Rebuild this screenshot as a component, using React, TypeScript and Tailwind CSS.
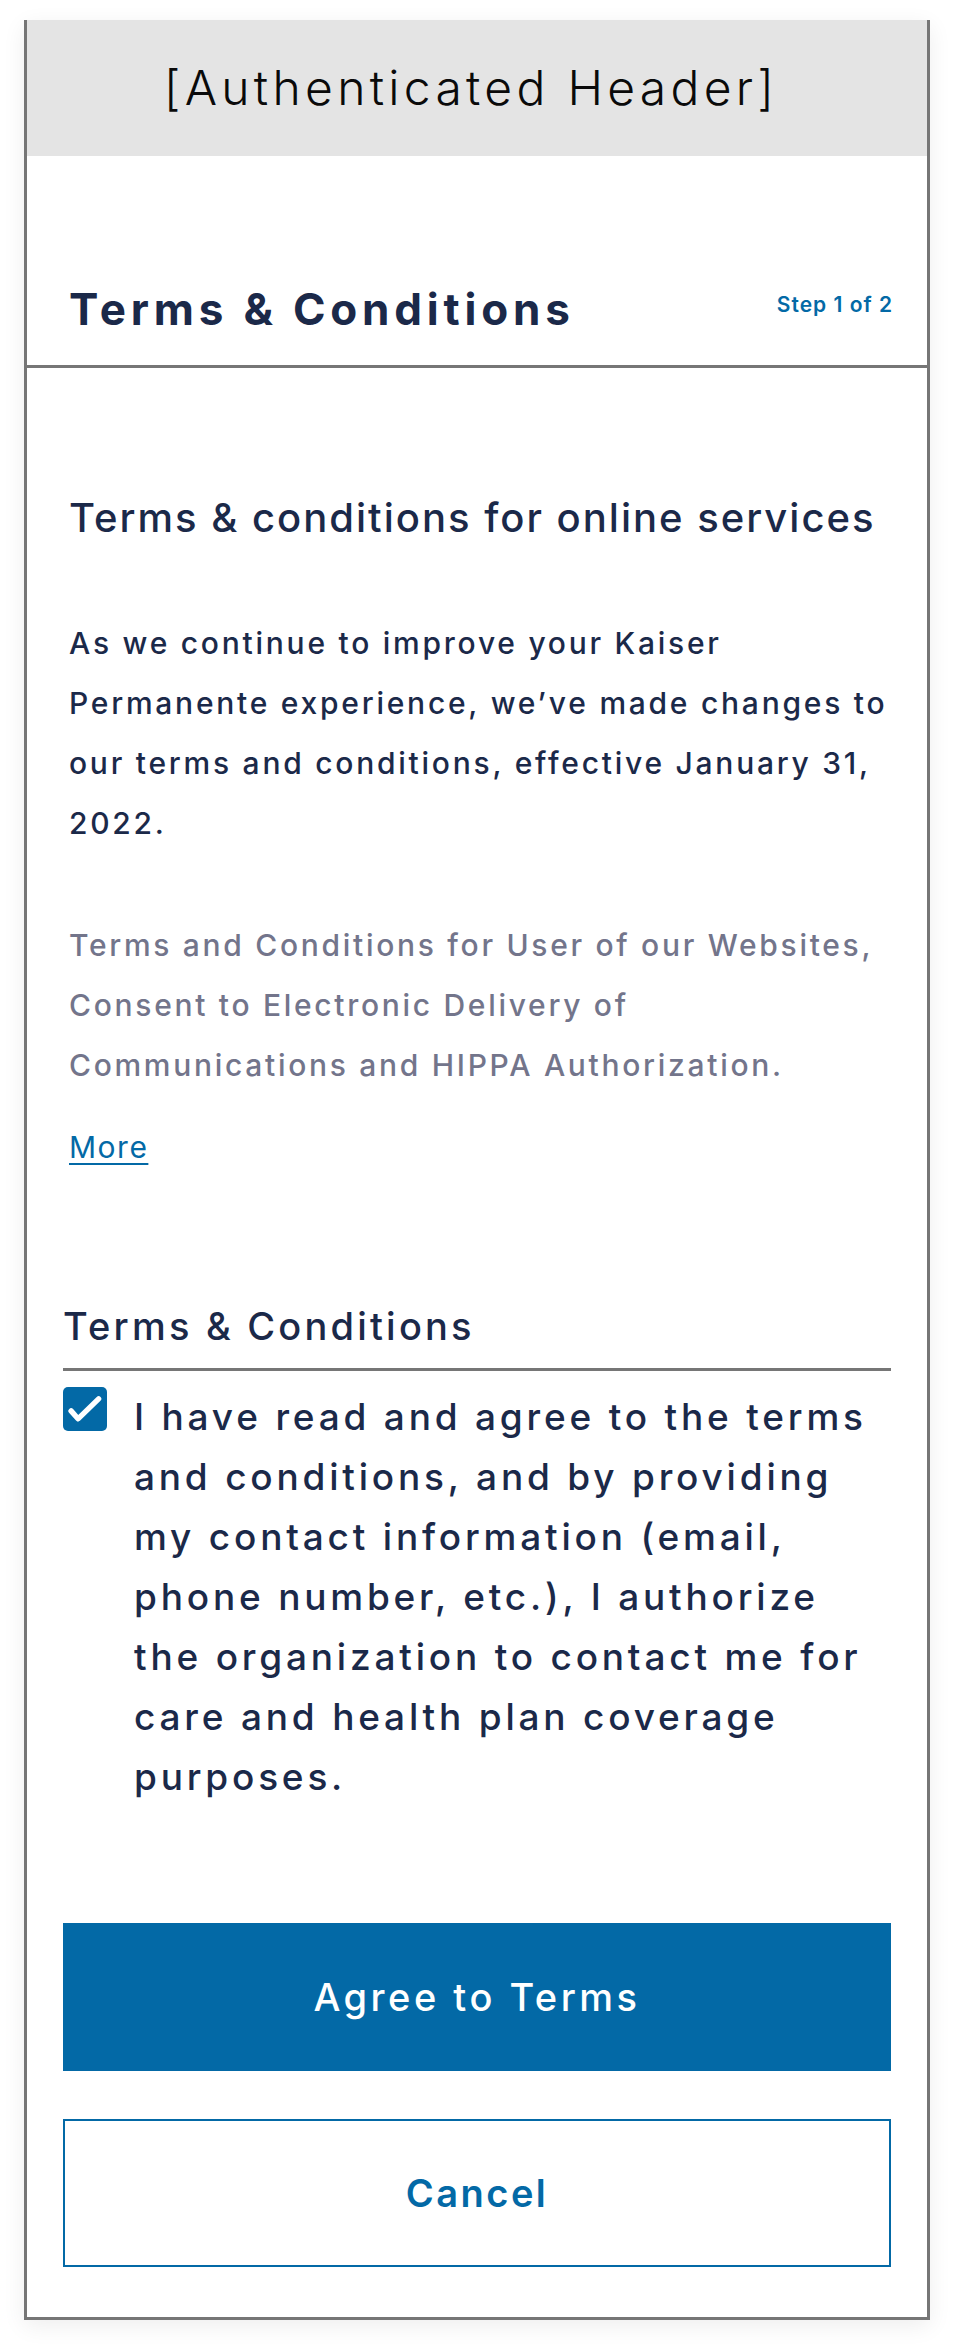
import React from "react";

function CheckIcon() {
  return (
    <svg viewBox="0 0 24 24" className="h-full w-full" fill="none">
      <path
        d="M3.2 13.2 L7.6 18.2 L20.6 5.6"
        stroke="#ffffff"
        strokeWidth="3.4"
        strokeLinecap="round"
        strokeLinejoin="round"
      />
    </svg>
  );
}

export default function App() {
  return (
    <div className="min-h-screen bg-white px-[24px] pt-[20px] pb-[27px] font-[family-name:Inter,'Liberation_Sans',sans-serif]">
      <div className="border-x-[3px] border-b-[3px] border-[#767676] bg-white shadow-[0_6px_22px_rgba(0,0,0,0.07)]">
        <header className="flex h-[136px] items-center justify-center bg-[#e4e4e4] pr-[12px]">
          <span className="text-[48px] font-light leading-[56px] tracking-[4.3px] text-[#0a0a0a]">
            [Authenticated Header]
          </span>
        </header>

        <div className="flex items-start justify-between border-b-[3px] border-[#767676] pb-[30px] pl-[42px] pr-[34px] pt-[127px]">
          <h1 className="text-[44px] font-bold leading-[52px] tracking-[4.8px] text-[#1b2949]">
            Terms &amp; Conditions
          </h1>
          <span className="mt-[8px] text-[21px] font-semibold leading-[28px] tracking-[1px] text-[#0369a6]">
            Step 1 of 2
          </span>
        </div>

        <section className="pl-[42px] pr-[36px] pt-[126px]">
          <h2 className="whitespace-nowrap text-[40px] font-medium leading-[48px] tracking-[2px] text-[#1b2949]">
            Terms &amp; conditions for online services
          </h2>
          <p className="mt-[71px] whitespace-nowrap text-[30px] font-medium leading-[60px] tracking-[2.75px] text-[#1b2949]">
            As we continue to improve your Kaiser
            <br />
            Permanente experience, we’ve made changes to
            <br />
            our terms and conditions, effective January 31,
            <br />
            2022.
          </p>
          <p className="mt-[62px] whitespace-nowrap text-[30px] font-medium leading-[60px] tracking-[2.7px] text-[#73758b]">
            Terms and Conditions for User of our Websites,
            <br />
            Consent to Electronic Delivery of
            <br />
            Communications and HIPPA Authorization.
          </p>
          <a
            href="#"
            className="mt-[32px] block w-fit text-[30px] font-normal leading-[40px] tracking-[1.5px] text-[#0369a6] underline decoration-[2px] underline-offset-[5px]"
          >
            More
          </a>
        </section>

        <section className="px-[36px] pb-[50px] pt-[136px]">
          <h3 className="border-b-[3px] border-[#767676] pb-[19px] text-[38px] font-medium leading-[46px] tracking-[3.2px] text-[#1b2949]">
            Terms &amp; Conditions
          </h3>
          <div className="mt-[16px] flex items-start gap-[27px]">
            <div className="h-[44px] w-[44px] shrink-0 rounded-[5px] bg-[#0369a6] p-[3px]">
              <CheckIcon />
            </div>
            <p className="whitespace-nowrap text-[37px] font-medium leading-[60px] tracking-[3.8px] text-[#1b2949]">
              I have read and agree to the terms
              <br />
              and conditions, and by providing
              <br />
              my contact information (email,
              <br />
              phone number, etc.), I authorize
              <br />
              the organization to contact me for
              <br />
              care and health plan coverage
              <br />
              purposes.
            </p>
          </div>

          <button className="mt-[116px] flex h-[148px] w-full items-center justify-center bg-[#0369a6] text-[38px] font-medium tracking-[3.5px] text-white">
            Agree to Terms
          </button>
          <button className="mt-[48px] flex h-[148px] w-full items-center justify-center border-2 border-[#0369a6] bg-white text-[38px] font-semibold tracking-[2.5px] text-[#0369a6]">
            Cancel
          </button>
        </section>
      </div>
    </div>
  );
}
